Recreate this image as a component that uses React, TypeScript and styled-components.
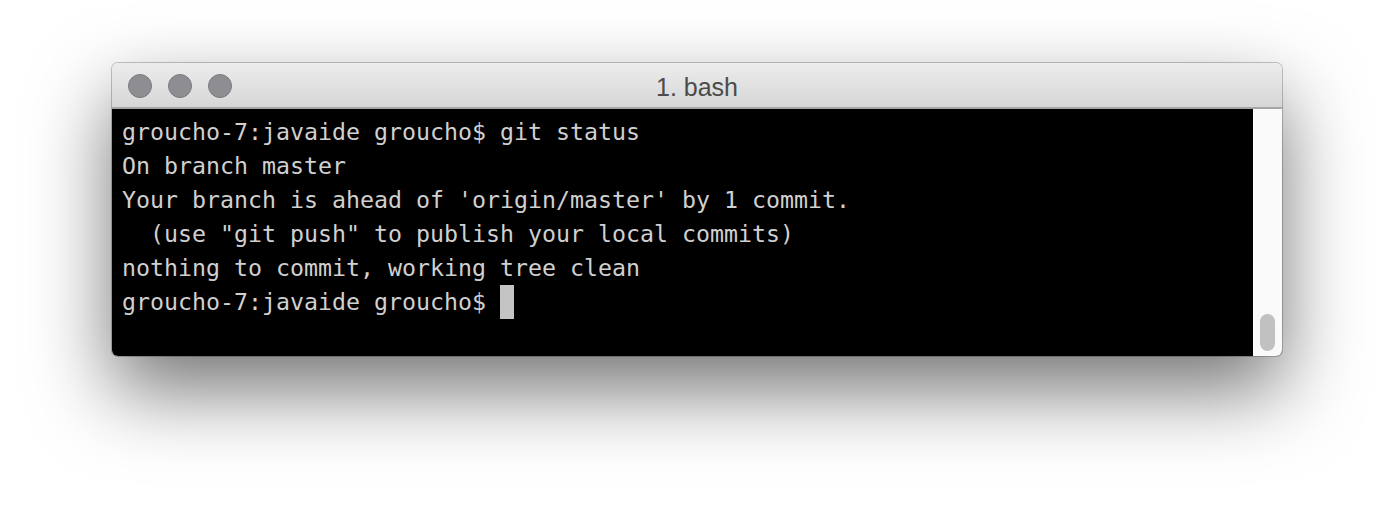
import React from "react";
import styled, { createGlobalStyle } from "styled-components";

const Global = createGlobalStyle`
  html, body { margin: 0; padding: 0; background: #ffffff; }
  body { width: 1394px; height: 516px; overflow: hidden; }
`;

const Stage = styled.div`
  display: flex;
  justify-content: center;
  padding-top: 63px;
`;

const Window = styled.div`
  width: 1170px;
  height: 293px;
  display: flex;
  flex-direction: column;
  border-radius: 6px;
  overflow: hidden;
  box-shadow: 0 0 0 1px rgba(0, 0, 0, 0.22), 0 34px 80px rgba(0, 0, 0, 0.55);
`;

const TitleBar = styled.div`
  position: relative;
  height: 44px;
  flex: none;
  display: flex;
  align-items: center;
  justify-content: center;
  background: linear-gradient(#ececec, #d6d6d6);
  border-bottom: 2px solid #a6a6a6;
`;

const Lights = styled.div`
  position: absolute;
  left: 16px;
  top: 11px;
  display: flex;
  gap: 16px;
`;

const Light = styled.span`
  width: 22px;
  height: 22px;
  border-radius: 50%;
  background: #8e8d92;
  border: 1px solid #7b7a7f;
`;

const Title = styled.div`
  font-family: "Liberation Sans", Arial, sans-serif;
  font-size: 25px;
  color: #4b4b4b;
  padding-top: 4px;
`;

const Body = styled.div`
  flex: 1;
  display: flex;
  background: #000;
`;

const Screen = styled.pre`
  flex: 1;
  margin: 0;
  padding: 6px 0 0 10px;
  font-family: "DejaVu Sans Mono", monospace;
  font-size: 23.25px;
  line-height: 34px;
  color: #d0d0d0;
  white-space: pre;
`;

const Cursor = styled.span`
  display: inline-block;
  width: 14px;
  height: 34px;
  vertical-align: top;
  background: #c4c4c4;
`;

const ScrollTrack = styled.div`
  width: 29px;
  flex: none;
  background: #fafafa;
  display: flex;
  flex-direction: column;
  justify-content: flex-end;
  align-items: center;
  padding-bottom: 5px;
`;

const Thumb = styled.div`
  width: 15px;
  height: 37px;
  border-radius: 8px;
  background: #c1c1c1;
`;

const lines = [
  "groucho-7:javaide groucho$ git status",
  "On branch master",
  "Your branch is ahead of 'origin/master' by 1 commit.",
  '  (use "git push" to publish your local commits)',
  "nothing to commit, working tree clean",
];

export default function App() {
  return (
    <>
      <Global />
      <Stage>
        <Window>
          <TitleBar>
            <Lights>
              <Light />
              <Light />
              <Light />
            </Lights>
            <Title>1. bash</Title>
          </TitleBar>
          <Body>
            <Screen>
              {lines.join("\n") + "\n"}
              {"groucho-7:javaide groucho$ "}
              <Cursor />
            </Screen>
            <ScrollTrack>
              <Thumb />
            </ScrollTrack>
          </Body>
        </Window>
      </Stage>
    </>
  );
}
